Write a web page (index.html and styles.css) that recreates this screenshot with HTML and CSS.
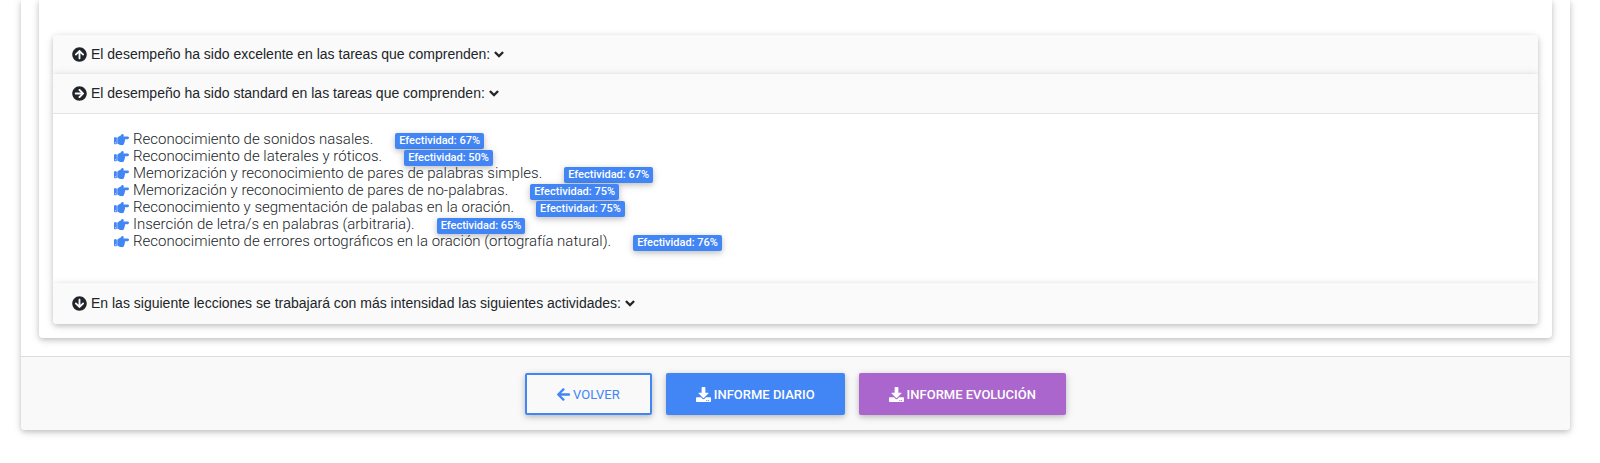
FILE: index.html
```html
<!DOCTYPE html>
<html lang="es">
<head>
<meta charset="utf-8">
<meta name="viewport" content="width=device-width, initial-scale=1">
<title>Informe</title>
<link rel="stylesheet" href="styles.css">
</head>
<body>
<svg class="sprite" aria-hidden="true">
<symbol id="circle-up" viewBox="0 0 512 512"><path d="M8 256C8 119 119 8 256 8s248 111 248 248-111 248-248 248S8 393 8 256zm143.600 28.900l72.400-75.500V392c0 13.300 10.700 24 24 24h16c13.300 0 24-10.700 24-24V209.400l72.400 75.500c9.300 9.700 24.800 9.900 34.300.4l10.900-11c9.400-9.400 9.400-24.600 0-33.900L273 107.700c-9.400-9.400-24.600-9.400-33.900 0L106.300 240.400c-9.400 9.400-9.400 24.600 0 33.900l10.900 11c9.600 9.500 25.100 9.300 34.400-.4z"/></symbol>
<symbol id="angle-down" viewBox="0 0 320 512"><path d="M143 352.300L7 216.300c-9.400-9.400-9.400-24.600 0-33.900l22.600-22.600c9.400-9.400 24.600-9.400 33.900 0l96.400 96.400 96.400-96.400c9.400-9.400 24.600-9.400 33.900 0l22.600 22.600c9.400 9.400 9.400 24.600 0 33.900l-136 136c-9.200 9.400-24.400 9.400-33.800 0z"/></symbol>
<symbol id="hand-right" viewBox="0 0 512 512"><path d="M512 199.652c0 23.625-20.650 43.826-44.800 43.826h-99.851c16.340 17.048 18.346 49.766-6.299 70.944 14.288 22.829 2.147 53.017-16.450 62.315C353.574 425.878 322.654 448 272 448c-2.746 0-13.276-.203-16-.195-61.971.168-76.894-31.065-123.731-38.315C120.596 407.683 112 397.599 112 385.786V214.261l.002-.001c.011-18.366 10.607-35.889 28.464-43.845 28.886-12.994 95.413-49.038 107.534-77.323 7.797-18.194 21.384-29.084 40-29.092 34.222-.014 57.752 35.098 44.119 66.908-3.583 8.359-8.312 16.670-14.153 24.918H467.200c23.450 0 44.800 20.543 44.800 43.826zM96 200v192c0 13.255-10.745 24-24 24H24c-13.255 0-24-10.745-24-24V200c0-13.255 10.745-24 24-24h48c13.255 0 24 10.745 24 24zM68 368c0-11.046-8.954-20-20-20s-20 8.954-20 20 8.954 20 20 20 20-8.954 20-20z"/></symbol>
<symbol id="arrow-left" viewBox="0 0 448 512"><path d="M257.500 445.100l-22.200 22.200c-9.400 9.400-24.600 9.400-33.900 0L7 273c-9.400-9.400-9.400-24.600 0-33.900L201.400 44.700c9.400-9.400 24.600-9.400 33.900 0l22.200 22.200c9.500 9.500 9.300 25-.4 34.300L136.600 216H424c13.300 0 24 10.700 24 24v32c0 13.300-10.700 24-24 24H136.600l120.500 114.800c9.800 9.300 10 24.800.4 34.300z"/></symbol>
<symbol id="download" viewBox="0 0 512 512"><path d="M216 0h80c13.300 0 24 10.700 24 24v168h87.700c17.800 0 26.700 21.500 14.100 34.100L269.700 378.300c-7.500 7.500-19.800 7.500-27.300 0L90.100 226.100c-12.600-12.600-3.700-34.100 14.100-34.100H192V24c0-13.300 10.700-24 24-24zm296 376v112c0 13.300-10.700 24-24 24H24c-13.300 0-24-10.700-24-24V376c0-13.300 10.700-24 24-24h146.700l49 49c20.100 20.100 52.500 20.100 72.600 0l49-49H488c13.300 0 24 10.700 24 24zm-124 88c0-11-9-20-20-20s-20 9-20 20 9 20 20 20 20-9 20-20zm64 0c0-11-9-20-20-20s-20 9-20 20 9 20 20 20 20-9 20-20z"/></symbol>
</svg>
<main class="card report">
<div class="report-body">
<section class="card panel">
<div class="accordion">
<div class="card">
<button class="card-header" type="button" aria-expanded="false">
<svg class="icon"><use href="#circle-up"/></svg>
<span>El desempeño ha sido excelente en las tareas que comprenden:</span>
<svg class="angle"><use href="#angle-down"/></svg>
</button>
</div>
<div class="card">
<button class="card-header open" type="button" aria-expanded="true">
<svg class="icon right"><use href="#circle-up"/></svg>
<span>El desempeño ha sido standard en las tareas que comprenden:</span>
<svg class="angle"><use href="#angle-down"/></svg>
</button>
<ul class="tasks">
<li><svg class="hand"><use href="#hand-right"/></svg>Reconocimiento de sonidos nasales.<span class="badge">Efectividad: 67%</span></li>
<li><svg class="hand"><use href="#hand-right"/></svg>Reconocimiento de laterales y róticos.<span class="badge">Efectividad: 50%</span></li>
<li><svg class="hand"><use href="#hand-right"/></svg>Memorización y reconocimiento de pares de palabras simples.<span class="badge">Efectividad: 67%</span></li>
<li><svg class="hand"><use href="#hand-right"/></svg>Memorización y reconocimiento de pares de no-palabras.<span class="badge">Efectividad: 75%</span></li>
<li><svg class="hand"><use href="#hand-right"/></svg>Reconocimiento y segmentación de palabas en la oración.<span class="badge">Efectividad: 75%</span></li>
<li><svg class="hand"><use href="#hand-right"/></svg>Inserción de letra/s en palabras (arbitraria).<span class="badge">Efectividad: 65%</span></li>
<li><svg class="hand"><use href="#hand-right"/></svg>Reconocimiento de errores ortográficos en la oración (ortografía natural).<span class="badge">Efectividad: 76%</span></li>
</ul>
</div>
<div class="card">
<button class="card-header" type="button" aria-expanded="false">
<svg class="icon down"><use href="#circle-up"/></svg>
<span>En las siguiente lecciones se trabajará con más intensidad las siguientes actividades:</span>
<svg class="angle"><use href="#angle-down"/></svg>
</button>
</div>
</div>
</section>
</div>
<footer class="report-footer">
<button class="btn btn-outline" type="button"><svg class="arrow"><use href="#arrow-left"/></svg>VOLVER</button>
<button class="btn btn-primary" type="button"><svg class="download"><use href="#download"/></svg>INFORME DIARIO</button>
<button class="btn btn-secondary" type="button"><svg class="download"><use href="#download"/></svg>INFORME EVOLUCIÓN</button>
</footer>
</main>
</body>
</html>
```
FILE: styles.css
```css
* {
    box-sizing: border-box;
}
body {
    margin: 0;
    background: #fff;
    color: #212529;
    font-family: Roboto, "Liberation Sans", sans-serif;
    font-size: 15px;
}
svg {
    fill: currentColor;
    flex: none;
}
.sprite {
    display: none;
}
.card {
    background: #fff;
    border-radius: 4px;
    box-shadow: 0 2px 5px rgba(0,0,0,0.16), 0 2px 10px rgba(0,0,0,0.12);
}
.report {
    margin: 0 30px 32px 21px;
    border-top-left-radius: 0;
    border-top-right-radius: 0;
}
.report-body {
    padding: 0 18px 18px;
}
.panel {
    padding: 35px 14px 14px;
    border-top-left-radius: 0;
    border-top-right-radius: 0;
}

/* accordion */
.accordion .card {
    border-radius: 0;
}
.accordion .card:first-child,
.accordion .card:first-child .card-header {
    border-radius: 4px 4px 0 0;
}
.accordion .card:last-child,
.accordion .card:last-child .card-header {
    border-radius: 0 0 4px 4px;
}
.card-header {
    display: flex;
    align-items: center;
    gap: 4px;
    width: 100%;
    height: 39px;
    padding: 0 19px 1px;
    border: 0;
    background: #fafafa;
    color: #212529;
    font-family: "Liberation Sans", Arial, sans-serif;
    font-size: 14px;
    text-align: left;
    cursor: pointer;
}
.card-header.open {
    height: 40px;
    border-bottom: 1px solid #e3e3e3;
}
.card:last-child > .card-header {
    height: 41px;
}
.icon {
    width: 15px;
    height: 15px;
}
.icon.right {
    transform: rotate(90deg);
}
.icon.down {
    transform: rotate(180deg);
}
.angle {
    width: 10px;
    height: 15px;
}
.tasks {
    margin: 0;
    padding: 17px 20px 33px 61px;
    list-style: none;
    font-weight: 300;
    line-height: 17px;
}
.tasks li {
    display: flex;
    align-items: center;
}
.hand {
    width: 15px;
    height: 15px;
    margin-right: 4px;
    color: #4285f4;
}
.badge {
    margin: 2px 0 -1px 22px;
    padding: 0 4px;
    border-radius: 2px;
    background: #4285f4;
    color: #fff;
    box-shadow: 0 2px 5px rgba(0,0,0,0.16), 0 2px 10px rgba(0,0,0,0.12);
    font-size: 11px;
    font-weight: 500;
    line-height: 16px;
}

/* footer buttons */
.report-footer {
    display: flex;
    justify-content: center;
    gap: 14px;
    padding: 16px 16px 15px;
    border-top: 1px solid #dcdcdc;
    border-radius: 0 0 4px 4px;
    background: #f9f9f9;
}
.btn {
    display: flex;
    align-items: center;
    gap: 3px;
    height: 42px;
    padding: 0 30px;
    border: 0;
    border-radius: 2px;
    color: #fff;
    box-shadow: 0 2px 5px rgba(0,0,0,0.16), 0 2px 10px rgba(0,0,0,0.12);
    font-family: inherit;
    font-size: 13px;
    font-weight: 500;
    cursor: pointer;
}
.btn-outline {
    border: 2px solid #4285f4;
    background: transparent;
    color: #4285f4;
    font-weight: 400;
}
.btn-primary {
    background: #4285f4;
}
.btn-secondary {
    background: #a6c;
}
.arrow {
    width: 13px;
    height: 15px;
}
.download {
    width: 15px;
    height: 15px;
}
```
